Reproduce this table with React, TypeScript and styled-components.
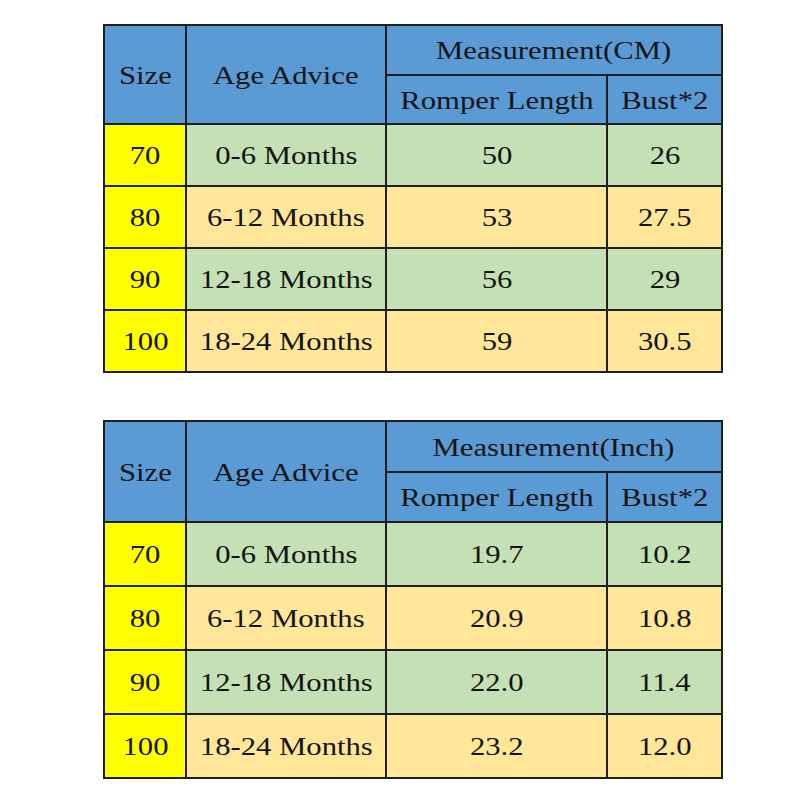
import styled, { createGlobalStyle } from 'styled-components'

const GlobalStyle = createGlobalStyle`
  html, body {
    margin: 0;
    padding: 0;
    background: #ffffff;
  }
`

interface Row {
  size: string
  age: string
  length: string
  bust: string
}

interface ChartProps {
  unit: string
  headerTop: number
  headerSub: number
  rowHeight: number
  rows: Row[]
}

const cmRows: Row[] = [
  { size: '70', age: '0-6 Months', length: '50', bust: '26' },
  { size: '80', age: '6-12 Months', length: '53', bust: '27.5' },
  { size: '90', age: '12-18 Months', length: '56', bust: '29' },
  { size: '100', age: '18-24 Months', length: '59', bust: '30.5' },
]

const inchRows: Row[] = [
  { size: '70', age: '0-6 Months', length: '19.7', bust: '10.2' },
  { size: '80', age: '6-12 Months', length: '20.9', bust: '10.8' },
  { size: '90', age: '12-18 Months', length: '22.0', bust: '11.4' },
  { size: '100', age: '18-24 Months', length: '23.2', bust: '12.0' },
]

const SizeChart: React.FC<ChartProps> = ({ unit, headerTop, headerSub, rowHeight, rows }) => {
  return (
    <Table $top={headerTop} $sub={headerSub} $row={rowHeight}>
      <Cell $tone="blue" $rowSpan={2}>
        <Label>Size</Label>
      </Cell>
      <Cell $tone="blue" $rowSpan={2}>
        <Label>Age Advice</Label>
      </Cell>
      <Cell $tone="blue" $colSpan={2}>
        <Label>Measurement({unit})</Label>
      </Cell>
      <Cell $tone="blue">
        <Label>Romper Length</Label>
      </Cell>
      <Cell $tone="blue">
        <Label>Bust*2</Label>
      </Cell>
      {rows.map((row, i) => {
        const tone = i % 2 === 0 ? 'green' : 'peach'
        return [
          <Cell key={`s${i}`} $tone="yellow">
            <Label>{row.size}</Label>
          </Cell>,
          <Cell key={`a${i}`} $tone={tone}>
            <Label>{row.age}</Label>
          </Cell>,
          <Cell key={`l${i}`} $tone={tone}>
            <Label>{row.length}</Label>
          </Cell>,
          <Cell key={`b${i}`} $tone={tone}>
            <Label>{row.bust}</Label>
          </Cell>,
        ]
      })}
    </Table>
  )
}

export default function App() {
  return (
    <>
      <GlobalStyle />
      <Page>
        <SizeChart unit="CM" headerTop={50} headerSub={49} rowHeight={62} rows={cmRows} />
        <SizeChart unit="Inch" headerTop={51} headerSub={50} rowHeight={64} rows={inchRows} />
      </Page>
    </>
  )
}

const Page = styled.div`
  display: flex;
  flex-direction: column;
  align-items: flex-start;
  gap: 47px;
  padding: 24px 0 0 103px;
  width: 800px;
  height: 800px;
  box-sizing: border-box;
`

const Table = styled.div<{ $top: number; $sub: number; $row: number }>`
  display: grid;
  grid-template-columns: 82px 200px 221px 115px;
  grid-template-rows: ${(p) => `${p.$top}px ${p.$sub}px repeat(4, ${p.$row}px)`};
  border-left: 2px solid #1f1f1f;
  border-top: 2px solid #1f1f1f;
`

const tones: Record<string, string> = {
  blue: '#5b9bd5',
  green: '#c5e0b4',
  peach: '#ffe699',
  yellow: '#ffff00',
}

const Cell = styled.div<{ $tone: string; $rowSpan?: number; $colSpan?: number }>`
  box-sizing: border-box;
  display: flex;
  align-items: center;
  justify-content: center;
  padding-top: 2px;
  background: ${(p) => tones[p.$tone]};
  border-right: 2px solid #1f1f1f;
  border-bottom: 2px solid #1f1f1f;
  grid-row: span ${(p) => p.$rowSpan ?? 1};
  grid-column: span ${(p) => p.$colSpan ?? 1};
  overflow: hidden;
`

const Label = styled.span`
  display: inline-block;
  font-family: 'Liberation Serif', 'Times New Roman', serif;
  font-size: 26px;
  color: #141414;
  white-space: nowrap;
  transform: scaleX(1.18);
`
